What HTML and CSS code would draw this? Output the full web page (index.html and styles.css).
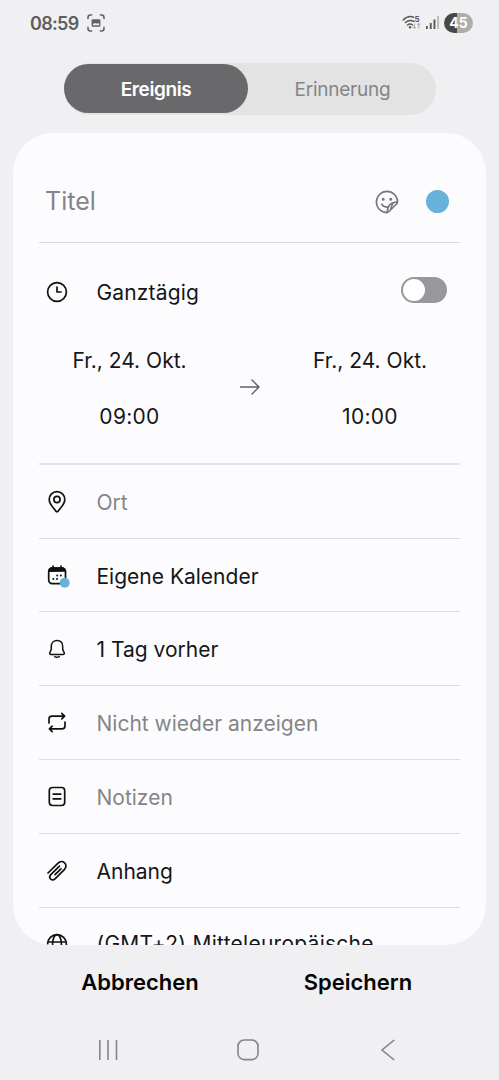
FILE: index.html
```html
<!DOCTYPE html>
<html lang="de">
<head>
<meta charset="utf-8">
<title>Ereignis</title>
<link rel="stylesheet" href="styles.css">
</head>
<body>
<div class="screen">
  <header class="status">
    <span class="clock">08:59</span>
    <svg class="shot" width="18" height="18" viewBox="0 0 18 18" fill="none" stroke="#626264" stroke-width="1.6" stroke-linecap="round">
      <path d="M1 4.6V3.4Q1 1 3.4 1h1.2M13.4 1h1.2Q17 1 17 3.4v1.2M17 13.4v1.2q0 2.400-2.400 2.400h-1.200M4.600 17H3.400Q1 17 1 14.600v-1.200"/>
      <rect x="4.600" y="5.200" width="8.800" height="7.600" rx="1" fill="#626264" stroke="none"/>
      <path d="M6 11.300v-1.300l2-1 1.600.8 1.200-.9 1.400 1v1.400z" fill="#f0f0f2" stroke="none"/>
    </svg>
    <svg class="signals" width="38" height="18" viewBox="0 0 38 18" fill="none">
      <g stroke="#58585a" stroke-width="1.500" stroke-linecap="round">
        <path d="M1.200 6Q6 1.200 11.500 3.200M3.400 8.500Q7.500 5 12 7.400M5.500 11Q8 9 10.500 11"/>
      </g>
      <circle cx="8" cy="13.300" r="1.200" fill="#58585a"/>
      <text class="band" x="12.600" y="8">5</text>
      <path d="M12.400 9.500v5M10.900 13l1.500 1.600 1.500-1.600M16.800 14.500v-5M15.300 11l1.500-1.600 1.500 1.600" stroke="#a8a8aa" stroke-width="1"/>
      <g fill="#58585a"><rect x="24" y="12" width="1.800" height="3"/><rect x="27.800" y="9" width="1.900" height="6"/><rect x="31.500" y="5.500" width="1.900" height="9.500"/></g>
      <rect x="35.200" y="2" width="1.800" height="13" fill="#b8b8ba"/>
    </svg>
    <span class="battery">45</span>
  </header>

  <nav class="tabs">
    <span class="tab active">Ereignis</span>
    <span class="tab">Erinnerung</span>
  </nav>

  <main class="card">
    <section class="title-row">
      <span class="title">Titel</span>
      <svg class="sticker" width="24" height="24" viewBox="0 0 24 24" fill="none" stroke="#77777a" stroke-width="1.600" stroke-linecap="round" stroke-linejoin="round">
        <path d="M12 22.600A10.600 10.600 0 1 1 22.600 12Q22.400 13 21.500 14L14 21.500Q13 22.400 12 22.600z"/>
        <path d="M12.300 22.300C12.300 15.500 15.500 12.300 22.300 12M6.700 14.200Q8.500 17.600 12.800 17M15.800 18.500L17.800 13.500"/>
        <circle cx="8.200" cy="9.200" r=".7" fill="#77777a"/><circle cx="15.800" cy="9.200" r=".7" fill="#77777a"/>
      </svg>
      <span class="color-dot"></span>
    </section>

    <section class="time">
      <div class="allday">
        <svg class="icon" viewBox="0 0 24 24"><circle cx="12" cy="12" r="9.400"/><path d="M12 7.200V12h4"/></svg>
        <span class="label">Ganztägig</span>
        <span class="switch"><span class="knob"></span></span>
      </div>
      <div class="range">
        <div class="moment"><span class="date">Fr., 24. Okt.</span><span class="hour">09:00</span></div>
        <svg class="arrow" width="22" height="18" viewBox="0 0 22 18" fill="none" stroke="#636365" stroke-width="1.400"><path d="M1 9h19M12.500 1.500L20 9l-7.500 7.500"/></svg>
        <div class="moment"><span class="date">Fr., 24. Okt.</span><span class="hour">10:00</span></div>
      </div>
    </section>

    <div class="row">
      <svg class="icon" viewBox="0 0 24 24"><path d="M13.200 21.100q-1.200 1.200-2.400 0C8.500 17.800 4.200 14.200 4.200 9.400a7.800 7.800 0 0 1 15.600 0C19.800 14.200 15.500 17.800 13.200 21.100z"/><circle cx="12" cy="9.500" r="3.100"/></svg>
      <span class="label hint">Ort</span>
    </div>
    <div class="row calendar">
      <svg class="icon" viewBox="0 0 24 24"><rect x="3.700" y="5" width="16.800" height="15.600" rx="3.500"/><path d="M4 8.100Q4 5 7 5h10q3 0 3 3z" fill="#111"/><path d="M8 3.200v2M16 3.200v2"/><g fill="#111" stroke="none"><circle cx="12.200" cy="12.500" r="1"/><circle cx="15.900" cy="12.500" r="1"/><circle cx="8.300" cy="16.100" r="1"/><circle cx="12" cy="16.100" r="1"/></g><circle cx="19.700" cy="19.800" r="5" fill="#66b2da" stroke="none"/></svg>
      <span class="label">Eigene Kalender</span>
    </div>
    <div class="row">
      <svg class="icon thin" viewBox="0 0 24 24"><path d="M6.300 9.400C6.300 5.500 8.800 3.600 12 3.600s5.700 1.900 5.700 5.800v3l1.500 3.300q.7 1.700-1 1.700H5.800q-1.700 0-1-1.700l1.500-3.300zM9.700 19.700q2.300 1.200 4.600 0"/></svg>
      <span class="label">1 Tag vorher</span>
    </div>
    <div class="row">
      <svg class="icon" viewBox="0 0 24 24"><path d="M4 12V8Q4 5.100 7 5.100h12.500M16.800 2.400l2.800 2.700-2.800 2.700M20 11v4q0 2.900-3 2.900H4.500M7.200 15.200l-2.800 2.700 2.800 2.700"/></svg>
      <span class="label hint">Nicht wieder anzeigen</span>
    </div>
    <div class="row">
      <svg class="icon" viewBox="0 0 24 24"><rect x="4.300" y="2.500" width="15.400" height="18" rx="3.200"/><path d="M8.200 9.100h7.600M8.200 13.800h7.600"/></svg>
      <span class="label hint">Notizen</span>
    </div>
    <div class="row">
      <svg class="icon" viewBox="0 0 24 24"><path d="M3 14L12.800 4.300c4.800-4.600 11.200 1.500 6.500 6.300L10.300 19.600c-3.500 3.300-7.600-.8-4.300-4.200L14.500 7.200M10 15.600l6-5.800"/></svg>
      <span class="label">Anhang</span>
    </div>
    <div class="row zone">
      <svg class="icon" viewBox="0 0 24 24"><circle cx="12" cy="13" r="9.400"/><ellipse cx="12" cy="13" rx="4.400" ry="9.400"/><path d="M3.300 11h17.400M3.300 16h17.400"/></svg>
      <span class="label">(GMT+2) Mitteleuropäische</span>
    </div>
  </main>

  <footer class="actions">
    <span class="action">Abbrechen</span>
    <span class="action save">Speichern</span>
  </footer>

  <nav class="system-nav">
    <svg width="20" height="20" viewBox="0 0 20 20"><path d="M1.800 0v20M10 0v20M18.500 0v20"/></svg>
    <svg width="22" height="22" viewBox="0 0 22 22"><rect x="1" y="1" width="20" height="19.600" rx="6.200"/></svg>
    <svg width="14" height="22" viewBox="0 0 14 22"><path d="M13.300 1L1 11l12.300 10"/></svg>
  </nav>
</div>
</body>
</html>
```

FILE: styles.css
```css
* { box-sizing: border-box; }

body {
  margin: 0;
  background: #f0f0f2;
  color: #161618;
  font-family: Inter, "Liberation Sans", sans-serif;
}

.screen {
  display: flex;
  flex-direction: column;
  width: 499px;
  height: 1080px;
  overflow: hidden;
}

.status {
  display: flex;
  align-items: center;
  height: 63px;
  padding: 0 26px 17px 30px;
}

.clock { width: 57px; font-size: 18px; font-weight: 600; letter-spacing: -0.7px; color: #5e5e60; }
.signals { margin-left: auto; margin-right: 4px; }
.band { font-size: 8px; font-weight: 700; fill: #58585a; }

.battery {
  width: 29px;
  height: 20px;
  border-radius: 10px;
  background: linear-gradient(90deg, #484848 45%, #adadad 45%);
  color: #fff;
  font-size: 14px;
  font-weight: 700;
  line-height: 20px;
  text-align: center;
}

.tabs {
  display: flex;
  width: 372px;
  height: 52px;
  margin-left: 64px;
  padding: 1px 0;
  border-radius: 26px;
  background: #e3e3e4;
}

.tab {
  display: flex;
  flex: 0 0 184px;
  align-items: center;
  justify-content: center;
  height: 49px;
  padding-top: 2px;
  border-radius: 25px;
  font-size: 19px;
  letter-spacing: -0.25px;
  color: #858587;
}

.tab + .tab { flex-basis: 189px; }
.tab.active { background: #69696b; color: #fff; font-weight: 600; letter-spacing: -0.4px; }

.card {
  width: 473px;
  height: 812px;
  margin: 18px 0 0 13px;
  padding: 0 26px;
  overflow: hidden;
  border-radius: 40px;
  background: #fcfcfe;
}

.title-row {
  display: flex;
  align-items: center;
  height: 110px;
  padding: 28px 11px 0 6px;
  border-bottom: 1px solid #d9d9db;
}

.title { padding-bottom: 1px; font-size: 25px; color: #858587; }
.sticker { margin-left: auto; margin-right: 27px; }
.color-dot { width: 23px; height: 23px; border-radius: 50%; background: #66b2da; }

.time { height: 222px; border-bottom: 2px solid #e5e5e7; }

.allday,
.row {
  display: flex;
  align-items: center;
  padding-left: 6px;
}

.allday { height: 98px; }
.allday .label { letter-spacing: 0.15px; }

.icon {
  flex: none;
  width: 24px;
  height: 24px;
  margin-right: 27.5px;
  overflow: visible;
  fill: none;
  stroke: #111;
  stroke-width: 1.7;
  stroke-linecap: round;
  stroke-linejoin: round;
}

.thin { stroke-width: 1.5; }

.label { font-size: 21px; white-space: nowrap; }
.hint { color: #858587; }
.row .label { padding-top: 1px; }

.switch {
  width: 46px;
  height: 26px;
  margin: 0 13px 4px auto;
  padding: 2px;
  border-radius: 13px;
  background: #98979c;
}

.knob { display: block; width: 22px; height: 22px; border-radius: 50%; background: #fff; }

.range { display: flex; padding-top: 4px; }
.moment { display: flex; flex: 0 0 181px; flex-direction: column; align-items: center; }
.moment:last-child { flex-basis: 240px; margin-left: -10px; }
.arrow { flex: none; margin: 33px -1px 0 19px; }
.date, .hour { height: 56px; font-size: 21px; line-height: 32px; }
.hour { letter-spacing: 0.3px; }

.row { height: 74px; border-bottom: 1px solid #dcdcde; }
.calendar { height: 73px; }
.calendar .label { padding-top: 2px; }
.zone { height: 70px; border: 0; letter-spacing: 0.26px; }

.actions {
  display: flex;
  height: 74px;
  padding-left: 30px;
}

.action {
  width: 220px;
  color: #050505;
  font-size: 22px;
  font-weight: 600;
  line-height: 74px;
  text-align: center;
}

.save { width: 216px; }

.system-nav {
  display: flex;
  align-items: center;
  justify-content: space-between;
  width: 297px;
  height: 61px;
  margin-left: 98px;
  fill: none;
  stroke: #858587;
  stroke-width: 1.6;
}

.system-nav svg:nth-child(2) { margin-right: 3px; }
```
